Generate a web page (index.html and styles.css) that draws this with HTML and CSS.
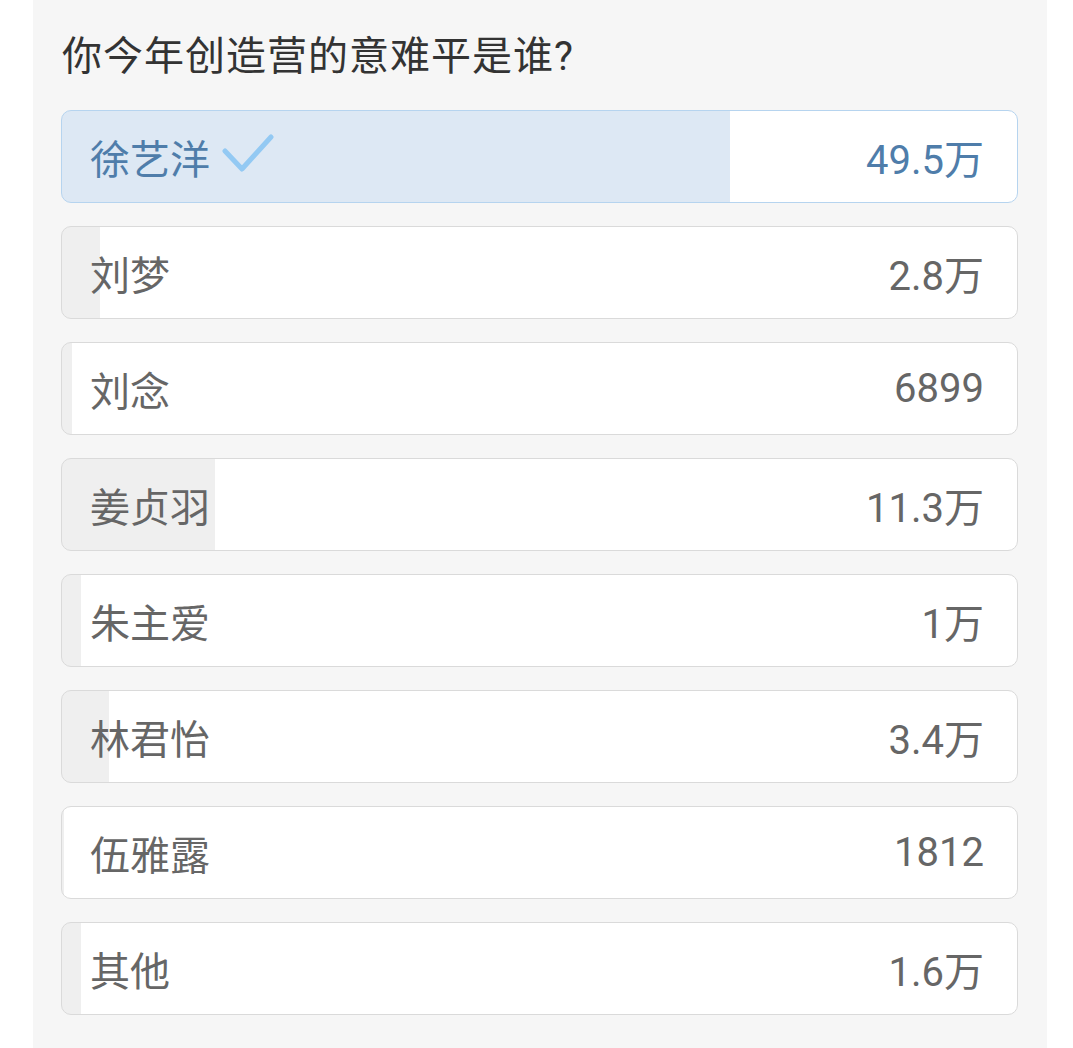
FILE: index.html
```html
<!DOCTYPE html>
<html lang="zh-CN">
<head>
<meta charset="utf-8">
<title>投票</title>
<link rel="stylesheet" href="styles.css">
</head>
<body>
<div class="panel">
  <div class="title">你今年创造营的意难平是谁?</div>
  <div class="options">
    <div class="option selected" style="--p:70%">
      <span class="name">徐艺洋<svg class="check" width="52" height="40" viewBox="0 0 52 40"><path d="M3 17 L20 35 L49 3" fill="none" stroke="#93c9f3" stroke-width="5" stroke-linecap="round" stroke-linejoin="round"/></svg></span>
      <span class="count">49.5万</span>
    </div>
    <div class="option" style="--p:4%">
      <span class="name">刘梦</span>
      <span class="count">2.8万</span>
    </div>
    <div class="option" style="--p:1%">
      <span class="name">刘念</span>
      <span class="count">6899</span>
    </div>
    <div class="option" style="--p:16%">
      <span class="name">姜贞羽</span>
      <span class="count">11.3万</span>
    </div>
    <div class="option" style="--p:2%">
      <span class="name">朱主爱</span>
      <span class="count">1万</span>
    </div>
    <div class="option" style="--p:4.9%">
      <span class="name">林君怡</span>
      <span class="count">3.4万</span>
    </div>
    <div class="option" style="--p:0.2%">
      <span class="name">伍雅露</span>
      <span class="count">1812</span>
    </div>
    <div class="option" style="--p:2%">
      <span class="name">其他</span>
      <span class="count">1.6万</span>
    </div>
  </div>
</div>
</body>
</html>
```
FILE: styles.css
```css
html, body {
  margin: 0;
  padding: 0;
  background: #ffffff;
}
body {
  font-family: Roboto, "Noto Sans CJK SC", sans-serif;
  height: 1048px;
  overflow: hidden;
}
.panel {
  margin-left: 33px;
  width: 1014px;
  height: 1048px;
  box-sizing: border-box;
  background: #f6f6f6;
  padding: 29px 29px 0 28px;
}
.title {
  font-size: 40px;
  line-height: 56px;
  letter-spacing: 1px;
  color: #333333;
  margin-bottom: 25px;
  padding-left: 1px;
}
.options {
  display: flex;
  flex-direction: column;
  gap: 23px;
}
.option {
  height: 93px;
  box-sizing: border-box;
  border: 1px solid #dadada;
  border-radius: 10px;
  background: linear-gradient(to right, #efefef var(--p), #ffffff var(--p));
  display: flex;
  align-items: center;
  justify-content: space-between;
  padding: 0 33px 0 28px;
  font-size: 40px;
  color: #666666;
  overflow: hidden;
}
.option.selected {
  border-color: #b6d4ef;
  background: linear-gradient(to right, #dde8f4 var(--p), #ffffff var(--p));
  color: #4f7daa;
}
.name {
  display: flex;
  align-items: center;
}
.check {
  margin-left: 12px;
  margin-top: -6px;
}
```
